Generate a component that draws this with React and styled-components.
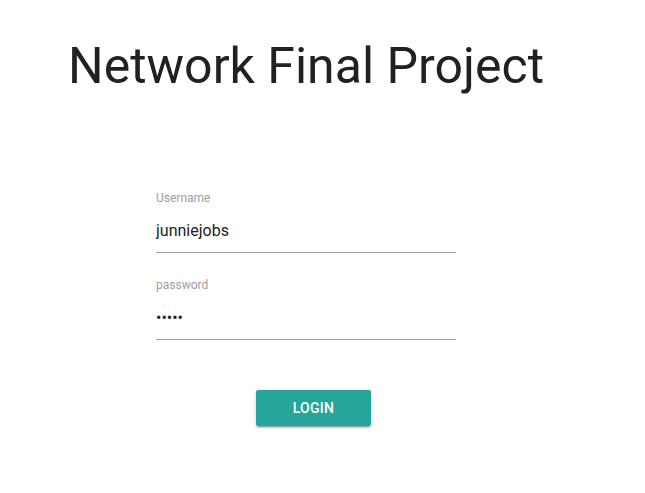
import React from 'react'
import styled, { createGlobalStyle } from 'styled-components'

const GlobalStyle = createGlobalStyle`
  html, body {
    margin: 0;
    padding: 0;
    background: #fff;
    font-family: Roboto, "Liberation Sans", sans-serif;
  }
`

const Page = styled.div`
  width: 645px;
  height: 493px;
  display: flex;
  flex-direction: column;
  box-sizing: border-box;
  padding: 36px 0 0 68px;
`

const Title = styled.h1`
  margin: 0;
  font-size: 50px;
  font-weight: 400;
  color: #212121;
  line-height: 60px;
`

const Form = styled.form`
  display: flex;
  flex-direction: column;
  width: 300px;
  margin: 95px 0 0 88px;
`

const Field = styled.div`
  display: flex;
  flex-direction: column;
  margin-bottom: ${({ $gap }) => $gap}px;
`

const Label = styled.label`
  font-size: 12px;
  color: #9e9e9e;
  line-height: 14px;
`

const Input = styled.input`
  box-sizing: border-box;
  border: none;
  border-bottom: 1px solid #9e9e9e;
  outline: none;
  padding: 0 0 4px;
  margin-top: 8px;
  height: 40px;
  font-family: Roboto, "Liberation Sans", sans-serif;
  font-size: 16px;
  color: #212121;
  background: transparent;
`

const ButtonRow = styled.div`
  display: flex;
  justify-content: center;
  padding-left: 15px;
  margin-top: 50px;
`

const Button = styled.button`
  width: 115px;
  height: 36px;
  border: none;
  border-radius: 2px;
  background: #26a69a;
  color: #fff;
  font-family: Roboto, "Liberation Sans", sans-serif;
  font-size: 14px;
  font-weight: 500;
  letter-spacing: 0.3px;
  box-shadow: 0 2px 2px 0 rgba(0, 0, 0, 0.14), 0 1px 5px 0 rgba(0, 0, 0, 0.12),
    0 3px 1px -2px rgba(0, 0, 0, 0.2);
  cursor: pointer;
`

export default function App() {
  return (
    <>
      <GlobalStyle />
      <Page>
        <Title>Network Final Project</Title>
        <Form onSubmit={e => e.preventDefault()}>
          <Field $gap={25}>
            <Label>Username</Label>
            <Input type="text" defaultValue="junniejobs" />
          </Field>
          <Field $gap={0}>
            <Label>password</Label>
            <Input type="password" defaultValue="12345" />
          </Field>
          <ButtonRow>
            <Button type="submit">LOGIN</Button>
          </ButtonRow>
        </Form>
      </Page>
    </>
  )
}
